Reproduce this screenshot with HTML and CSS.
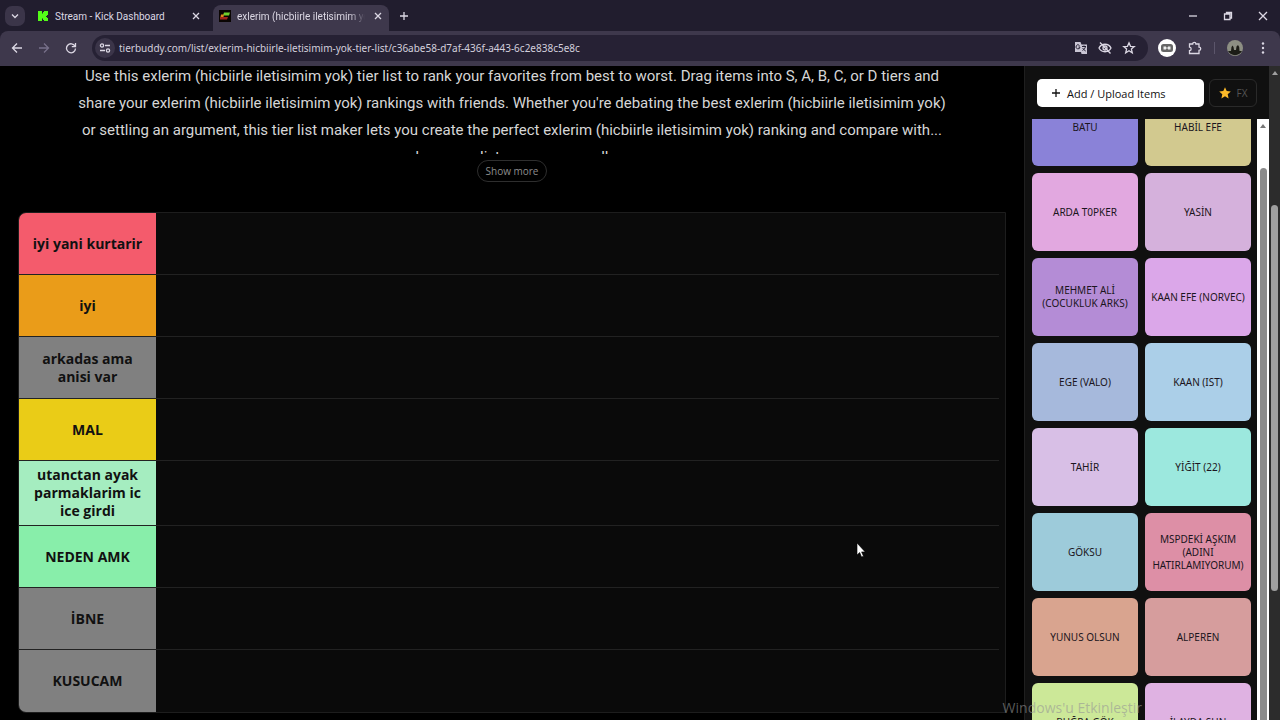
FILE: index.html
```
<!DOCTYPE html>
<html lang="tr">
<head>
    <meta charset="UTF-8">
    <meta name="viewport" content="width=device-width, initial-scale=1.0">
    <title>exlerim (hicbiirle iletisimim yok)</title>
    <link rel="stylesheet" href="styles.css">
</head>
<body>
    <header class="browser">
        <div class="tabs">
            <button class="tab-search" aria-label="Search tabs">
                <svg width="10" height="10" viewBox="0 0 10 10"><path d="M2 3.500l3 3 3-3"/></svg>
            </button>
            <div class="tab">
                <svg class="favicon" width="12" height="12" viewBox="0 0 12 12"><path class="kick" d="M1 1h4v2.500h1V2h1V1h4v4h-1v1h-1v1h1v1h1v3H7v-1H6V8.500H5V11H1z"/></svg>
                <span class="tab-title">Stream - Kick Dashboard</span>
                <button class="close" aria-label="Close tab"><svg width="8" height="8" viewBox="0 0 8 8"><path d="M1 1l6 6M7 1L1 7"/></svg></button>
            </div>
            <div class="tab active">
                <svg class="favicon" width="12" height="12" viewBox="0 0 12 12"><rect class="f-bg" width="12" height="12"/><path class="f-green" d="M5 2.500h6l-1 3H4z"/><path class="f-orange" d="M2 4.500h3L4.500 7H1.500z"/><path class="f-red" d="M1 7h8l-1 2.500H1z"/></svg>
                <span class="tab-title">exlerim (hicbiirle iletisimim yok)</span>
                <button class="close" aria-label="Close tab"><svg width="8" height="8" viewBox="0 0 8 8"><path d="M1 1l6 6M7 1L1 7"/></svg></button>
            </div>
            <button class="new-tab" aria-label="New tab"><svg width="10" height="10" viewBox="0 0 10 10"><path d="M5 1v8M1 5h8"/></svg></button>
            <div class="window-btns">
                <button aria-label="Minimize"><svg width="10" height="10" viewBox="0 0 10 10"><path d="M1 5h8"/></svg></button>
                <button aria-label="Restore"><svg width="10" height="10" viewBox="0 0 10 10"><path d="M1.500 3h5.500v5.500H1.500zM3.500 3V1.500H8.500v5.500H7"/></svg></button>
                <button aria-label="Close"><svg width="10" height="10" viewBox="0 0 10 10"><path d="M1 1l8 8M9 1l-8 8"/></svg></button>
            </div>
        </div>
        <div class="toolbar">
            <button class="nav" aria-label="Back"><svg width="12" height="12" viewBox="0 0 12 12"><path d="M11 6H1.500M6 1.500L1.500 6 6 10.500"/></svg></button>
            <button class="nav off" aria-label="Forward"><svg width="12" height="12" viewBox="0 0 12 12"><path d="M1 6h9.500M6 1.500L10.500 6 6 10.500"/></svg></button>
            <button class="nav" aria-label="Reload"><svg width="12" height="12" viewBox="0 0 12 12"><path d="M10 4.200A4.500 4.500 0 1 0 10.500 6.500M10.500 1v3.700H6.800"/></svg></button>
            <div class="address">
                <button class="site-info" aria-label="Site information"><svg width="12" height="12" viewBox="0 0 12 12"><circle cx="3" cy="3.500" r="1.600"/><path d="M6 3.500h5M1 8.500h5"/><circle cx="9" cy="8.500" r="1.600"/></svg></button>
                <input class="url" type="text" aria-label="Address" value="tierbuddy.com/list/exlerim-hicbiirle-iletisimim-yok-tier-list/c36abe58-d7af-436f-a443-6c2e838c5e8c">
                <button aria-label="Translate"><svg width="14" height="14" viewBox="0 0 14 14"><path class="solid" d="M1 1h5.500l1 2.500H13V13H7.500L7 11H1z"/><path class="cut" d="M5.500 4.500A2 2 0 1 0 6 6H4.500M8 5.500h4M10 4.500v1M11.500 5.500c-.5 2-1.500 3-3 4M8.700 7c.8 1.500 1.600 2.200 3 3"/></svg></button>
                <button aria-label="Third-party cookies blocked"><svg width="14" height="14" viewBox="0 0 14 14"><path d="M1 7c2.500-5 9.500-5 12 0-2.500 5-9.500 5-12 0zM2 1.500l10.500 11"/><circle cx="7" cy="7" r="2"/></svg></button>
                <button aria-label="Bookmark"><svg width="14" height="14" viewBox="0 0 14 14"><path d="M7 1.800l1.500 3.500 3.800.3-2.900 2.500.9 3.700L7 9.800l-3.300 2 .9-3.700-2.900-2.500 3.800-.3z"/></svg></button>
            </div>
            <button class="ext" aria-label="Extension"><svg width="18" height="18" viewBox="0 0 18 18"><circle class="ext-bg" cx="9" cy="9" r="9"/><rect class="ext-box" x="3" y="5" width="12" height="8" rx="2.500"/><path class="ext-eye" d="M5.500 7.500h2.500v3H5.500zM10 7.500h2.500v3H10zM8 8.500h2v1H8z"/></svg></button>
            <button class="puzzle" aria-label="Extensions"><svg width="14" height="14" viewBox="0 0 14 14"><path d="M1.500 3h3.200c0-2.200 3.200-2.200 3.200 0H11v3.200c2.300 0 2.300 3.200 0 3.200v3.100H1.500V9.600c2.200-.2 2.200-3.200 0-3.400z"/></svg></button>
            <span class="divider"></span>
            <button class="profile" aria-label="Profile"><svg width="16" height="16" viewBox="0 0 16 16"><circle class="p-sky" cx="8" cy="8" r="8"/><path class="p-ground" d="M1 11h3l.5-4L5.500 5.500 6.500 7l.5 3h2l.5-3.500L11 5l1.200 2 .3 4H15a8 8 0 0 1-14 0z"/></svg></button>
            <button class="menu" aria-label="Menu"><svg width="4" height="14" viewBox="0 0 4 14"><circle cx="2" cy="2.500" r="1.200"/><circle cx="2" cy="7" r="1.200"/><circle cx="2" cy="11.500" r="1.200"/></svg></button>
        </div>
    </header>

    <div class="page">
        <main class="content">
            <div class="desc">
                <p>Use this exlerim (hicbiirle iletisimim yok) tier list to rank your favorites from best to worst. Drag items into S, A, B, C, or D tiers and<br>share your exlerim (hicbiirle iletisimim yok) rankings with friends. Whether you're debating the best exlerim (hicbiirle iletisimim yok)<br>or settling an argument, this tier list maker lets you create the perfect exlerim (hicbiirle iletisimim yok) ranking and compare with...<br>browse a list on our own wall</p>
            </div>
            <button class="show-more">Show more</button>
            <div class="tiers">
                <div class="tier"><div class="label red">iyi yani kurtarir</div><div class="drop"></div></div>
                <div class="tier"><div class="label orange">iyi</div><div class="drop"></div></div>
                <div class="tier"><div class="label gray">arkadas ama anisi var</div><div class="drop"></div></div>
                <div class="tier"><div class="label yellow">MAL</div><div class="drop"></div></div>
                <div class="tier"><div class="label mint">utanctan ayak parmaklarim ic ice girdi</div><div class="drop"></div></div>
                <div class="tier"><div class="label green">NEDEN AMK</div><div class="drop"></div></div>
                <div class="tier"><div class="label gray">İBNE</div><div class="drop"></div></div>
                <div class="tier"><div class="label gray">KUSUCAM</div><div class="drop"></div></div>
            </div>
        </main>

        <aside class="sidebar">
            <div class="actions">
                <button class="add"><svg width="10" height="10" viewBox="0 0 10 10"><path d="M5 1v8M1 5h8"/></svg>Add / Upload Items</button>
                <button class="fx"><svg width="12" height="12" viewBox="0 0 12 12"><path d="M6 .3l1.700 3.800 4.100.4-3.100 2.700.9 4.200L6 9.200l-3.600 2.200.9-4.200L.2 4.500l4.100-.4z"/></svg>FX</button>
            </div>
            <div class="pool">
                <div class="items">
                    <div class="item c1">BATU</div>
                    <div class="item c2">HABİL EFE</div>
                    <div class="item c3">ARDA T0PKER</div>
                    <div class="item c4">YASİN</div>
                    <div class="item c5">MEHMET ALİ (COCUKLUK ARKS)</div>
                    <div class="item c6">KAAN EFE (NORVEC)</div>
                    <div class="item c7">EGE (VALO)</div>
                    <div class="item c8">KAAN (IST)</div>
                    <div class="item c9">TAHİR</div>
                    <div class="item c10">YİĞİT (22)</div>
                    <div class="item c11">GÖKSU</div>
                    <div class="item c12">MSPDEKİ AŞKIM (ADINI HATIRLAMIYORUM)</div>
                    <div class="item c13">YUNUS OLSUN</div>
                    <div class="item c14">ALPEREN</div>
                    <div class="item c15">BUĞRA GÖK</div>
                    <div class="item c16">İLAYDA SUN</div>
                </div>
                <div class="pool-scroll"><span class="arrow"></span><span class="thumb"></span></div>
            </div>
        </aside>
        <div class="page-scroll"><span class="arrow"></span><span class="thumb"></span></div>
    </div>

    <div class="watermark">Windows'u Etkinleştir</div>
    <svg class="cursor" width="10" height="16" viewBox="0 0 10 16"><path d="M1 1v12l2.700-2.500L5.500 15l2-.8-1.900-4.300H9.200z"/></svg>
</body>
</html>
```
FILE: styles.css
```
*{
    box-sizing: border-box;
}
body{
    margin: 0;
    height: 100vh;
    display: flex;
    flex-direction: column;
    overflow: hidden;
    background: #000;
    font-family: "Open Sans", "Noto Sans", sans-serif;
}
button{
    display: flex;
    align-items: center;
    justify-content: center;
    padding: 0;
    border: 0;
    background: none;
    color: inherit;
    font-family: inherit;
    cursor: pointer;
}
svg{
    flex: none;
    fill: none;
    stroke: currentColor;
    stroke-width: 1.3;
}

/* browser */
.browser{
    flex: none;
    background: #211d2e;
    color: #dcd8e4;
}
.tabs{
    display: flex;
    align-items: center;
    height: 31px;
    padding-left: 5px;
}
.tab-search{
    width: 20px;
    height: 20px;
    border-radius: 7px;
    background: #3b3549;
}
.tab{
    display: flex;
    align-items: center;
    gap: 6px;
    width: 176px;
    height: 26px;
    margin: 5px 0 0 6px;
    padding: 0 4px 4px 6px;
    font-family: Roboto, sans-serif;
    font-size: 10px;
}
.active{
    gap: 6px;
    border-radius: 8px 8px 0 0;
    background: #3e384c;
}
.tab-title{
    flex: 1;
    overflow: hidden;
    white-space: nowrap;
}
.active .tab-title{
    mask-image: linear-gradient(to right, #000 88%, transparent);
}
.close{
    width: 14px;
    height: 14px;
}
.favicon{
    stroke: none;
}
.kick{
    fill: #53fc18;
}
.f-bg{
    fill: #0a0503;
}
.f-green{
    fill: #6fd02c;
}
.f-orange{
    fill: #e08a1c;
}
.f-red{
    fill: #a3261c;
}
.new-tab{
    width: 20px;
    height: 20px;
    margin-left: 5px;
}
.window-btns{
    display: flex;
    margin-left: auto;
}
.window-btns button{
    width: 35px;
    height: 30px;
}
.toolbar{
    display: flex;
    align-items: center;
    height: 35px;
    padding: 0 15px 1px 7px;
    border-radius: 8px 8px 0 0;
    background: #3e384c;
}
.nav{
    width: 20px;
    height: 20px;
    margin-right: 7px;
}
.off{
    color: #77708a;
}
.address{
    flex: 1;
    display: flex;
    align-items: center;
    gap: 10px;
    height: 26px;
    margin-left: 4px;
    padding: 0 12px 0 3px;
    border-radius: 13px;
    background: #262134;
}
.site-info{
    width: 20px;
    height: 20px;
    border-radius: 50%;
    background: #3b3549;
}
.url{
    flex: 1;
    min-width: 0;
    margin-left: -6px;
    padding: 0;
    border: 0;
    outline: 0;
    background: none;
    color: #d3cfdc;
    font-family: "Noto Sans", sans-serif;
    font-size: 10px;
}
.solid{
    fill: #c9c5d4;
    stroke: none;
}
.cut{
    stroke: #262134;
    stroke-width: 1;
}
.ext{
    margin-left: 10px;
}
.ext svg, .profile svg{
    stroke: none;
}
.ext-bg{
    fill: #fff;
}
.ext-box{
    fill: #666;
}
.ext-eye{
    fill: #eee;
}
.puzzle{
    margin-left: 12px;
}
.divider{
    width: 1px;
    height: 12px;
    margin: 0 12px;
    background: #5c566b;
}
.p-sky{
    fill: #8d8f83;
}
.p-ground{
    fill: #1c1d16;
}
.menu{
    margin-left: 18px;
}
.menu svg{
    fill: currentColor;
    stroke: none;
}

/* page */
.page{
    flex: 1;
    min-height: 0;
    display: flex;
}
.content{
    flex: 1;
    min-width: 0;
    display: flex;
    flex-direction: column;
    align-items: center;
    padding: 0 18px;
    overflow: hidden;
}
.desc{
    flex: none;
    height: 88px;
    overflow: hidden;
    color: #d6d6d6;
    font-family: Roboto, sans-serif;
    font-size: 15px;
    line-height: 27px;
    text-align: center;
    white-space: nowrap;
}
.desc p{
    margin: -3px 0 0;
}
.show-more{
    flex: none;
    width: 70px;
    height: 22px;
    margin: 6px 0 30px;
    border: 1px solid #2e2e2e;
    border-radius: 11px;
    color: #8d8d8d;
    font-size: 10px;
}
.tiers{
    flex: none;
    width: 100%;
    padding-right: 6px;
    border: 1px solid #1d1d1d;
    border-radius: 8px 0 0 8px;
    overflow: hidden;
    background: #0a0a0a;
}
.tier{
    display: flex;
    min-height: 62px;
    border-bottom: 1px solid #222;
}
.tier:last-child{
    border-bottom: 0;
}
.label{
    display: flex;
    align-items: center;
    justify-content: center;
    width: 137px;
    padding: 5px 12px;
    color: #111;
    font-size: 14px;
    font-weight: bold;
    line-height: 18px;
    text-align: center;
}
.drop{
    flex: 1;
}
.red{
    background: #f45b6c;
}
.orange{
    background: #ea9c19;
}
.gray{
    background: #808080;
}
.yellow{
    background: #eacc17;
}
.mint{
    background: #a5edc0;
}
.green{
    background: #88eeaa;
}

/* sidebar */
.sidebar{
    flex: none;
    display: flex;
    flex-direction: column;
    width: 245px;
    border-left: 1px solid #1f1f1f;
    background: #101010;
}
.actions{
    display: flex;
    gap: 5px;
    padding: 13px 12px 12px;
}
.add{
    flex: 1;
    justify-content: flex-start;
    gap: 6px;
    height: 28px;
    padding-left: 14px;
    border-radius: 5px;
    background: #fff;
    color: #111;
    font-size: 11px;
}
.fx{
    gap: 6px;
    width: 48px;
    height: 28px;
    border: 1px solid #2a2a2a;
    border-radius: 6px;
    color: #555;
    font-size: 10px;
}
.fx svg{
    fill: #fbb929;
    stroke: none;
}
.pool{
    flex: 1;
    min-height: 0;
    display: flex;
    gap: 6px;
    padding-left: 7px;
    overflow: hidden;
}
/* list is scrolled down a bit */
.items{
    flex: 1;
    display: grid;
    grid-template-columns: 1fr 1fr;
    grid-auto-rows: 78px;
    gap: 7px;
    margin-top: -31px;
}
.item{
    display: flex;
    align-items: center;
    justify-content: center;
    min-width: 0;
    border-radius: 6px;
    color: #1b1520;
    font-family: "Noto Sans", sans-serif;
    font-size: 10px;
    line-height: 13px;
    text-align: center;
}
.c1{ background: #8a82d8; }
.c2{ background: #d2c98f; }
.c3{ background: #e2a8e0; }
.c4{ background: #d5b1dc; }
.c5{ background: #b48cd6; }
.c6{ background: #dba7e9; }
.c7{ background: #a6b9dc; }
.c8{ background: #abcfe8; }
.c9{ background: #d8bfe6; }
.c10{ background: #9ce8de; }
.c11{ background: #9dcbda; }
.c12{ background: #dd8fa6; }
.c13{ background: #d9a48f; }
.c14{ background: #d69d9d; }
.c15{ background: #cce898; }
.c16{ background: #dfb2e2; }
.pool-scroll, .page-scroll{
    flex: none;
    display: flex;
    flex-direction: column;
    align-items: center;
    width: 12px;
    background: #fff;
}
.arrow{
    margin-top: 5px;
    border: 3px solid transparent;
    border-top: 0;
    border-bottom: 4px solid #777;
}
.thumb{
    width: 7px;
    border-radius: 4px;
    background: #8b8b8b;
}
.pool-scroll .thumb{
    flex: 1;
    margin-top: 40px;
    border-radius: 4px 4px 0 0;
}
.page-scroll{
    width: 11px;
    background: #2c2c2c;
}
.page-scroll .arrow{
    border-bottom-color: #a0a0a0;
}
.page-scroll .thumb{
    height: 59%;
    margin-top: 130px;
    background: #9f9f9f;
}

.watermark{
    position: absolute;
    right: 138px;
    bottom: 2px;
    color: rgba(150, 150, 150, .6);
    font-size: 14px;
    line-height: 20px;
}
.cursor{
    position: absolute;
    left: 856px;
    top: 542px;
    fill: #fff;
    stroke: #000;
    stroke-width: .6;
}
```
